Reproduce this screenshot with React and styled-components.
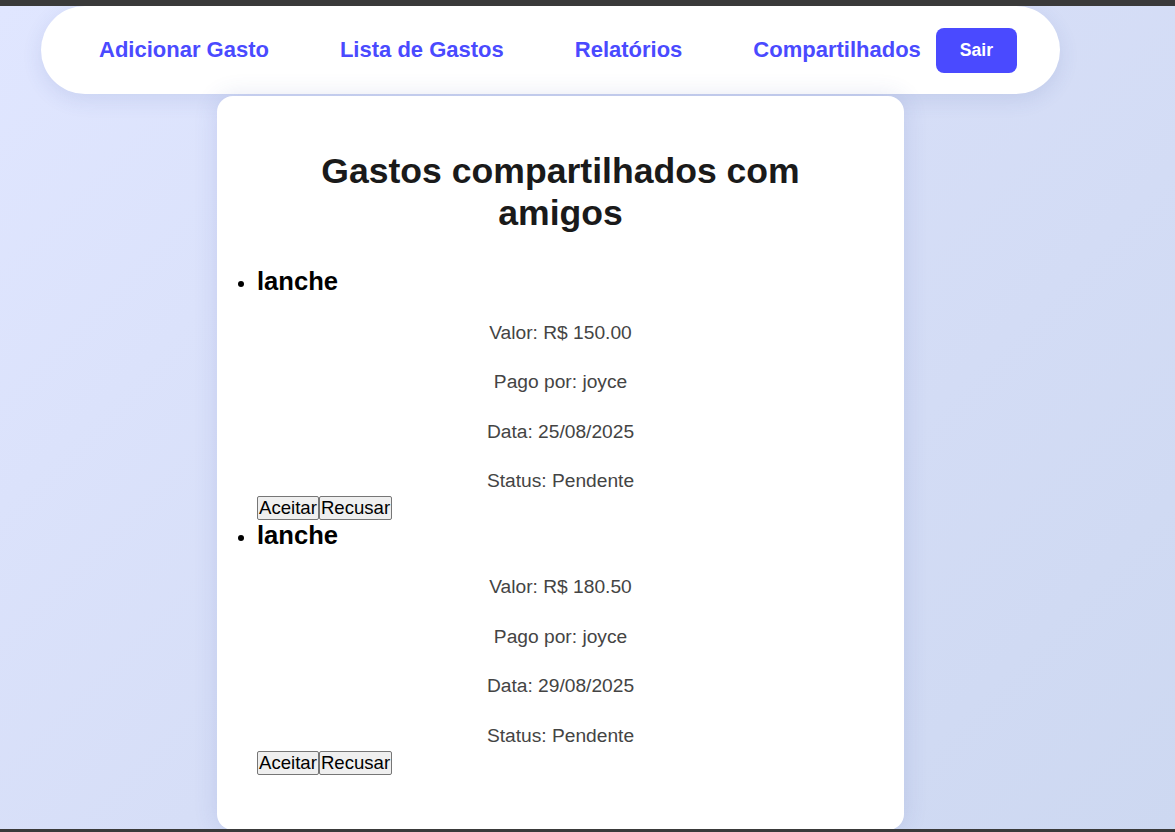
import React from "react";
import styled, { createGlobalStyle } from "styled-components";

const GlobalStyle = createGlobalStyle`
  html, body { margin: 0; padding: 0; }
  body {
    font-family: "Liberation Sans", Arial, sans-serif;
    height: 832px;
    overflow: hidden;
  }
`;

const Frame = styled.div`
  display: flex;
  flex-direction: column;
  height: 832px;
`;

const Edge = styled.div`
  height: ${(p) => p.$h}px;
  flex: none;
  background: #3a3a3a;
`;

const Stage = styled.div`
  flex: 1;
  overflow: hidden;
  background: linear-gradient(135deg, #e0e6ff 0%, #d6def7 50%, #cdd8f1 100%);
  display: flex;
  flex-direction: column;
`;

const Nav = styled.nav`
  flex: none;
  width: 1019px;
  height: 88px;
  box-sizing: border-box;
  margin-left: 41px;
  padding: 0 0 0 58px;
  background: #ffffff;
  border-radius: 44px;
  box-shadow: 0 6px 20px rgba(60, 80, 160, 0.12);
  display: flex;
  align-items: center;
`;

const NavLinks = styled.div`
  display: flex;
  align-items: center;
  gap: 71px;
  flex: none;
`;

const NavLink = styled.a`
  font-size: 22px;
  font-weight: 700;
  color: #4a4aff;
  text-decoration: none;
  white-space: nowrap;
  cursor: pointer;
`;

const LogoutButton = styled.button`
  flex: none;
  margin-left: 15px;
  background: #4a4aff;
  color: #ffffff;
  border: none;
  border-radius: 8px;
  padding: 12px 24px;
  font-family: "Liberation Sans", Arial, sans-serif;
  font-size: 17.6px;
  line-height: 21px;
  font-weight: 700;
  cursor: pointer;
`;

const Card = styled.main`
  flex: none;
  width: 687px;
  box-sizing: border-box;
  margin: 2px 0 0 217px;
  padding: 40px;
  background: #ffffff;
  border-radius: 16px;
  box-shadow: 0 0 24px rgba(60, 80, 160, 0.14);
`;

const Title = styled.h2`
  margin: 14px 0 32px;
  text-align: center;
  font-size: 35.6px;
  line-height: 42px;
  font-weight: 700;
  color: #1a1a1a;
`;

const List = styled.ul`
  margin: 0 0 15px;
  padding: 0;
`;

const Item = styled.li`
  color: #000;
  font-size: 21px;
`;

const ItemName = styled.h3`
  margin: 0 0 22px;
  font-size: 25.6px;
  line-height: 30px;
  font-weight: 700;
  color: #000;
`;

const Detail = styled.p`
  margin: 19.2px 0 0;
  text-align: center;
  font-size: 19.2px;
  line-height: 30.2px;
  color: #444;
`;

const Actions = styled.div`
  display: flex;
`;

const PlainButton = styled.button`
  font-family: "Liberation Sans", Arial, sans-serif;
  font-size: 18.6px;
  line-height: 20px;
  padding: 1px 1px;
  margin: 0;
  color: #000;
  background: #efefef;
  border: 1px solid #767676;
  border-radius: 2px;
  cursor: pointer;
`;

const shared = [
  { name: "lanche", valor: "150.00", pago: "joyce", data: "25/08/2025", status: "Pendente" },
  { name: "lanche", valor: "180.50", pago: "joyce", data: "29/08/2025", status: "Pendente" },
];

export default function App() {
  return (
    <>
      <GlobalStyle />
      <Frame>
        <Edge $h={6} />
        <Stage>
          <Nav>
            <NavLinks>
              <NavLink>Adicionar Gasto</NavLink>
              <NavLink>Lista de Gastos</NavLink>
              <NavLink>Relatórios</NavLink>
              <NavLink>Compartilhados</NavLink>
            </NavLinks>
            <LogoutButton>Sair</LogoutButton>
          </Nav>
          <Card>
            <Title>Gastos compartilhados com amigos</Title>
            <List>
              {shared.map((g, i) => (
                <Item key={i}>
                  <ItemName>{g.name}</ItemName>
                  <Detail>Valor: R$ {g.valor}</Detail>
                  <Detail>Pago por: {g.pago}</Detail>
                  <Detail>Data: {g.data}</Detail>
                  <Detail>Status: {g.status}</Detail>
                  <Actions>
                    <PlainButton>Aceitar</PlainButton>
                    <PlainButton>Recusar</PlainButton>
                  </Actions>
                </Item>
              ))}
            </List>
          </Card>
        </Stage>
        <Edge $h={3} />
      </Frame>
    </>
  );
}
